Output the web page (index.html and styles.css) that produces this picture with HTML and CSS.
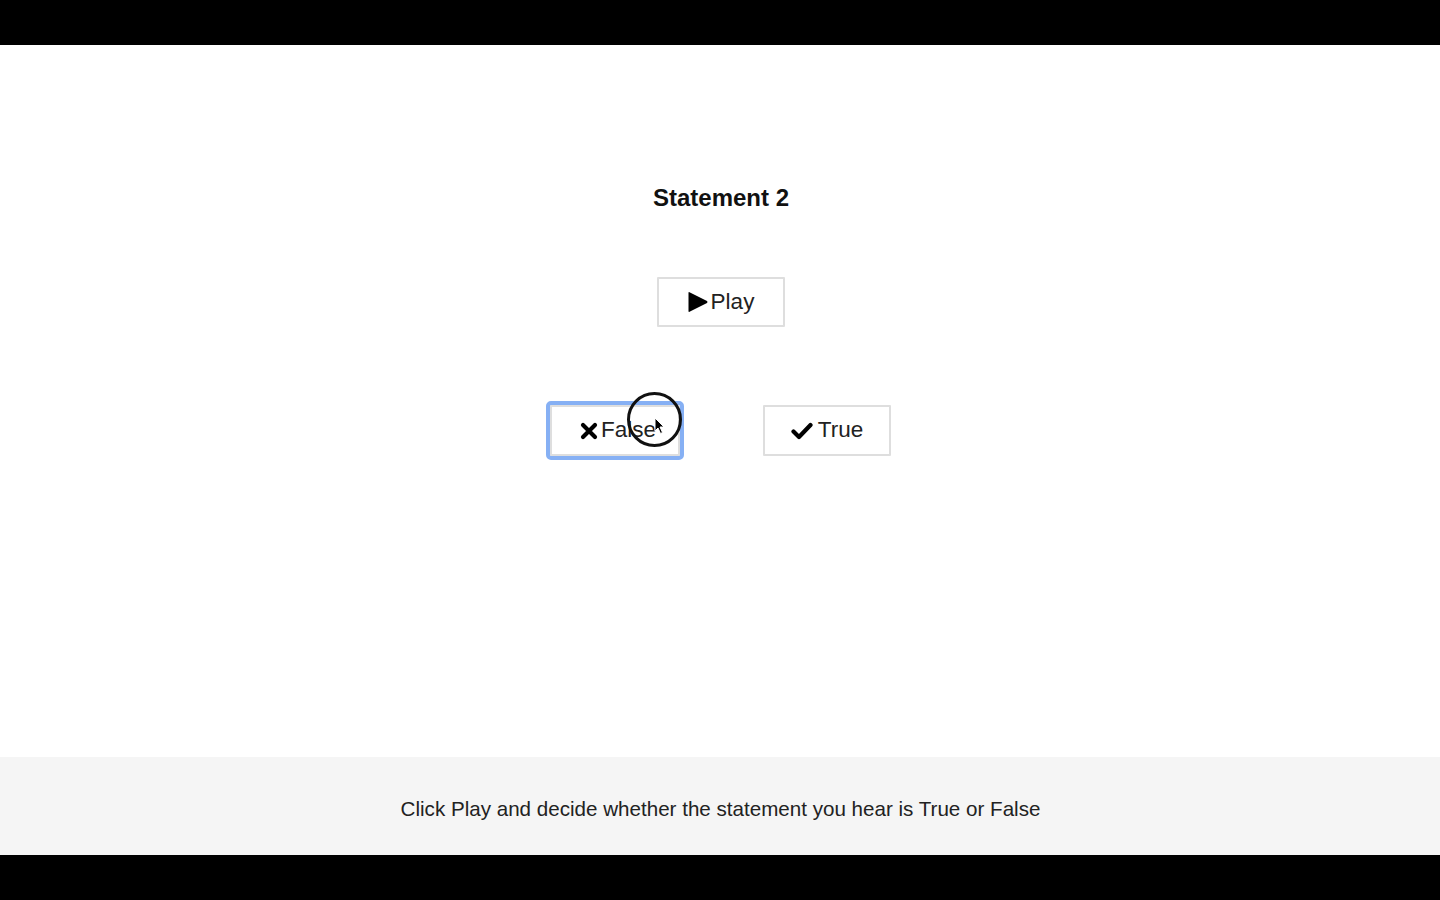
FILE: index.html
```html
<!DOCTYPE html>
<html lang="en">
<head>
<meta charset="utf-8">
<title>Statement 2</title>
<link rel="stylesheet" href="styles.css">
</head>
<body>
<div class="bar"></div>
<main class="stage">
  <h1 class="title">Statement 2</h1>
  <button class="btn">
    <svg class="ico ico-play" viewBox="0 0 20 22" aria-hidden="true"><path d="M1.5 1.2 Q0.5 0.6 0.5 2 V20 Q0.5 21.4 1.5 20.8 L19 12 Q20 11 19 10 Z" fill="#000"/></svg>
    <span>Play</span>
  </button>
  <div class="answers">
    <button class="btn btn-focus">
      <svg class="ico ico-x" viewBox="0 0 18 18" aria-hidden="true"><path d="M3 3 L15 15 M15 3 L3 15" stroke="#000" stroke-width="4.2" stroke-linecap="round"/></svg>
      <span>False</span>
    </button>
    <button class="btn">
      <svg class="ico ico-check" viewBox="0 0 22 18" aria-hidden="true"><path d="M2.5 9.5 L8 15 L19.5 3" fill="none" stroke="#000" stroke-width="4.2" stroke-linecap="round" stroke-linejoin="round"/></svg>
      <span>True</span>
    </button>
    <div class="cursor">
      <svg class="arrow" viewBox="0 0 12 18" aria-hidden="true"><path d="M1 1 V14 L4 11 L6.5 16.5 L8.5 15.5 L6 10 H10 Z" fill="#000" stroke="#fff" stroke-width="1"/></svg>
    </div>
  </div>
</main>
<footer class="footer">
  <p class="hint">Click Play and decide whether the statement you hear is True or False</p>
</footer>
<div class="bar"></div>
</body>
</html>
```
FILE: styles.css
```css
html, body {
  margin: 0;
  padding: 0;
  background: #000;
  font-family: "Liberation Sans", Arial, Helvetica, sans-serif;
  color: #222;
}
.bar {
  height: 45px;
  background: #000;
}
.stage {
  height: 712px;
  background: #fff;
  display: flex;
  flex-direction: column;
  align-items: center;
  padding-top: 138px;
  box-sizing: border-box;
}
.title {
  margin: 0 0 64px 0;
  font-size: 24px;
  line-height: 30px;
  font-weight: bold;
  color: #111;
  padding-left: 2px;
}
.btn {
  width: 128px;
  height: 50px;
  box-sizing: border-box;
  background: #fff;
  border: 2px solid #dedede;
  border-radius: 1px;
  display: flex;
  align-items: center;
  justify-content: center;
  gap: 3px;
  font-family: "Liberation Sans", Arial, Helvetica, sans-serif;
  font-size: 22.5px;
  color: #222;
  padding: 0;
  margin-left: 2px;
  cursor: pointer;
}
.btn span {
  line-height: 1;
}
.ico { display: block; }
.ico-play { width: 20px; height: 22px; }
.ico-x { width: 18px; height: 18px; margin-left: 2px; }
.ico-check { width: 22px; height: 18px; margin-right: 2px; }
.answers {
  position: relative;
  margin-top: 78px;
  display: flex;
  gap: 83px;
  margin-left: 1px;
}
.answers .btn { margin-left: 0; height: 51px; }
.btn-focus {
  width: 130px;
  outline: 4px solid #86b0f4;
  outline-offset: 0;
  padding-left: 4px;
}
.cursor {
  position: absolute;
  left: 77px;
  top: -13px;
  width: 55px;
  height: 55px;
  border: 3px solid #111;
  border-radius: 50%;
  box-sizing: border-box;
}
.arrow {
  position: absolute;
  left: 24px;
  top: 22px;
  width: 12px;
  height: 18px;
}
.footer {
  height: 98px;
  background: #f5f5f5;
  display: flex;
  align-items: center;
  justify-content: center;
}
.hint {
  margin: 0;
  font-size: 20.6px;
  color: #222;
  padding-left: 1px;
  padding-top: 6px;
}
```
